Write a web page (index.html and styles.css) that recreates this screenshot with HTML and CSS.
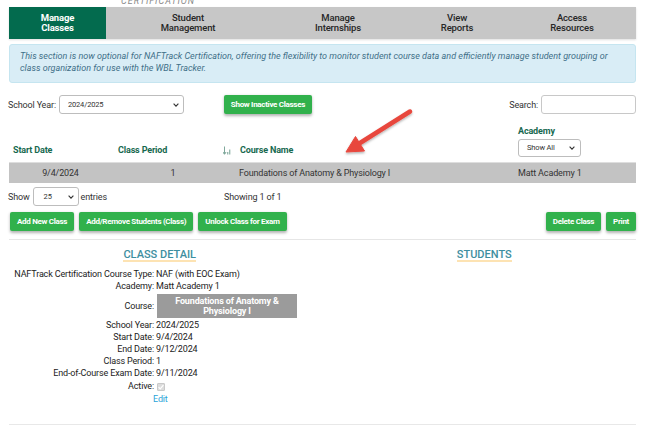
FILE: index.html
```html
<!DOCTYPE html>
<html lang="en">
<head>
<meta charset="utf-8">
<title>Manage Classes</title>
<link rel="stylesheet" href="styles.css">
</head>
<body>
<div class="page">
  <div class="cert"><span>CERTIFICATION</span></div>
  <nav class="tabs">
    <div class="tab active">Manage<br>Classes</div>
    <div class="tab">Student<br>Management</div>
    <div class="tab">Manage<br>Internships</div>
    <div class="tab">View<br>Reports</div>
    <div class="tab">Access<br>Resources</div>
  </nav>

  <div class="notice">This section is now optional for NAFTrack Certification, offering the flexibility to monitor student course data and efficiently manage student grouping or<br>class organization for use with the WBL Tracker.</div>

  <div class="toolbar">
    <span class="lbl">School Year:</span>
    <div class="select sy"><span>2024/2025</span><svg class="chev" width="6" height="4" viewBox="0 0 6 4"><polyline points="0.6,0.6 3,3.2 5.4,0.6"/></svg></div>
    <button class="btn inactive">Show Inactive Classes</button>
    <div class="search"><span class="lbl">Search:</span><div class="input"></div></div>
  </div>

  <div class="thead">
    <div class="th c1">Start Date</div>
    <div class="th c2">Class Period</div>
    <div class="th c3"><svg class="sort" width="8" height="9" viewBox="0 0 8 9"><path d="M1.5 0.5V8M0 6.2L1.5 8.3L3 6.2"/><rect x="4.2" y="6" width="1.1" height="2.5"/><rect x="6.2" y="3.5" width="1.1" height="5"/></svg><span>Course Name</span></div>
    <div class="th c4"><div>Academy</div><div class="select acad"><span>Show All</span><svg class="chev" width="6" height="4" viewBox="0 0 6 4"><polyline points="0.6,0.6 3,3.2 5.4,0.6"/></svg></div></div>
  </div>
  <div class="trow">
    <div class="c1">9/4/2024</div>
    <div class="c2">1</div>
    <div class="c3">Foundations of Anatomy &amp; Physiology I</div>
    <div class="c4">Matt Academy 1</div>
  </div>

  <div class="tfoot">
    <div class="len"><span>Show</span><div class="select num"><span>25</span><svg class="chev" width="6" height="4" viewBox="0 0 6 4"><polyline points="0.6,0.6 3,3.2 5.4,0.6"/></svg></div><span>entries</span></div>
    <div class="info">Showing 1 of 1</div>
  </div>

  <div class="actions">
    <div class="group">
      <button class="btn">Add New Class</button>
      <button class="btn">Add/Remove Students (Class)</button>
      <button class="btn">Unlock Class for Exam</button>
    </div>
    <div class="group">
      <button class="btn">Delete Class</button>
      <button class="btn">Print</button>
    </div>
  </div>

  <div class="detail">
    <section class="col left">
      <h2><span>CLASS DETAIL</span></h2>
      <dl class="facts">
        <dt>NAFTrack Certification Course Type:</dt><dd>NAF (with EOC Exam)</dd>
        <dt>Academy:</dt><dd>Matt Academy 1</dd>
        <dt class="mid">Course:</dt><dd><div class="course">Foundations of Anatomy &amp;<br>Physiology I</div></dd>
        <dt>School Year:</dt><dd>2024/2025</dd>
        <dt>Start Date:</dt><dd>9/4/2024</dd>
        <dt>End Date:</dt><dd>9/12/2024</dd>
        <dt>Class Period:</dt><dd>1</dd>
        <dt>End-of-Course Exam Date:</dt><dd>9/11/2024</dd>
        <dt class="act">Active:</dt><dd class="act"><span class="check"><svg width="8" height="8" viewBox="0 0 8 8"><polyline points="1.6,4.2 3.2,5.8 6.4,2.2"/></svg></span></dd>
        <dt></dt><dd><a class="edit">Edit</a></dd>
      </dl>
    </section>
    <section class="col right">
      <h2><span>STUDENTS</span></h2>
    </section>
  </div>
</div>

<svg class="arrow" width="650" height="436" viewBox="0 0 650 436">
  <defs>
    <filter id="sh" x="-20%" y="-20%" width="140%" height="140%">
      <feDropShadow dx="0" dy="1.5" stdDeviation="1.2" flood-color="#000" flood-opacity="0.3"/>
    </filter>
  </defs>
  <g filter="url(#sh)" fill="#e8473d" stroke="#e8473d">
    <line x1="410" y1="111.5" x2="360" y2="143" stroke-width="4.5" stroke-linecap="round"/>
    <polygon points="346,152 364.5,151 355.5,136.5" stroke-width="1" stroke-linejoin="round"/>
  </g>
</svg>
</body>
</html>
```

FILE: styles.css
```css
* { box-sizing: border-box; }

body {
  margin: 0;
  width: 650px;
  height: 436px;
  overflow: hidden;
  position: relative;
  background: #fff;
  font-family: Roboto, "Liberation Sans", sans-serif;
  font-size: 9px;
  letter-spacing: -0.15px;
  color: #333;
}

.page {
  margin-left: 9px;
  width: 627px;
}

/* clipped section title */
.cert {
  height: 7px;
  overflow: hidden;
  padding-left: 112px;
  font-size: 9px;
  line-height: 9px;
  font-style: italic;
  letter-spacing: 1px;
  color: #8a8a8a;
}
.cert span { display: block; margin-top: -3px; }

/* top tabs */
.tabs {
  display: grid;
  grid-template-columns: 97px 164px 136px 102px 1fr;
  height: 32px;
  background: #c7c7c7;
  box-shadow: 0 1px 2px rgba(0, 0, 0, 0.13);
}
.tab {
  display: flex;
  align-items: center;
  justify-content: center;
  text-align: center;
  font-size: 9.5px;
  line-height: 10px;
  font-weight: 500;
  color: #262626;
}
.tab.active {
  background: #036b4e;
  color: #fff;
  font-weight: 700;
}

/* notice */
.notice {
  margin-top: 5px;
  height: 39px;
  padding: 6px 10px;
  border: 1px solid #c5e5f0;
  border-radius: 3px;
  background: #d9edf6;
  color: #3f6f88;
  font-style: italic;
  font-size: 9px;
  line-height: 11.5px;
  letter-spacing: 0;
  white-space: nowrap;
}

/* toolbar */
.toolbar {
  margin-top: 12px;
  height: 19px;
  display: flex;
  align-items: center;
}
.lbl { font-size: 9px; color: #333; margin-left: -1px; }

.select {
  display: flex;
  align-items: center;
  justify-content: space-between;
  height: 19px;
  border: 1px solid #bdbdbd;
  border-radius: 3px;
  background: #fff;
  font-size: 7.5px;
  color: #333;
}
.chev { fill: none; stroke: #333; stroke-width: 1.1; }
.select.sy { width: 125px; margin-left: 3px; padding: 0 4px 0 8px; }

.btn {
  height: 19px;
  padding: 0 7px;
  border: 0;
  border-radius: 2px;
  background: #31b14c;
  color: #fff;
  font-family: inherit;
  font-size: 8px;
  font-weight: 700;
  letter-spacing: -0.3px;
  box-shadow: 0 1.5px 3px rgba(0, 0, 0, 0.3);
  white-space: nowrap;
}
.btn.inactive { margin-left: 40px; width: 88px; padding: 0; }

.search {
  margin-left: auto;
  display: flex;
  align-items: center;
}
.search .input {
  width: 95px;
  height: 19px;
  margin-left: 3px;
  border: 1px solid #c8c8c8;
  border-radius: 3px;
}

/* table */
.thead, .trow {
  display: grid;
  grid-template-columns: 103px 107px 291px 1fr;
}
.thead {
  margin-top: 11px;
  border-bottom: 1px solid #dedede;
}
.th {
  align-self: end;
  padding-bottom: 6px;
  font-weight: 700;
  line-height: 12px;
  color: #17694f;
}
.thead .c1 { padding-left: 4px; }
.thead .c2 { padding-left: 6px; }
.thead .c3 { padding-left: 4px; display: flex; align-items: center; }
.thead .c3 .sort { margin-right: 9px; fill: #7fa89b; stroke: #7fa89b; stroke-width: 1; }
.thead .c3 .sort rect { stroke: none; }
.thead .c4 { padding-left: 8px; padding-bottom: 5px; }
.select.acad { width: 63px; height: 18px; margin-top: 2px; padding: 0 5px 0 8px; font-weight: 400; color: #333; }

.trow {
  height: 20px;
  align-items: center;
  background: #c3c3c3;
  color: #333;
}
.trow .c1 { text-align: center; }
.trow .c2 { text-align: center; padding-left: 15px; }
.trow .c3 { padding-left: 20px; }
.trow .c4 { padding-left: 8px; }

/* table footer */
.tfoot {
  margin-top: 4px;
  height: 19px;
  display: grid;
  grid-template-columns: 215px 1fr;
  align-items: center;
}
.len { display: flex; align-items: center; margin-left: -1px; }
.select.num { width: 46px; margin: 0 2px 0 3px; padding: 0 4px 0 10px; }

.actions {
  margin-top: 6px;
  display: flex;
  justify-content: space-between;
}
.group { display: flex; gap: 5px; }
.actions .group:first-child { margin-left: 1px; }

/* detail */
.detail {
  margin-top: 8px;
  border-top: 1px solid #e6e6e6;
  border-bottom: 1px solid #e8e8e8;
  display: grid;
  grid-template-columns: 1fr 1fr;
  padding-bottom: 19px;
}
.col h2 {
  margin: 10px 0 0;
  text-align: center;
  font-size: 11px;
  font-weight: 500;
  line-height: 10px;
  letter-spacing: 0;
}
.col h2 span {
  display: inline-block;
  color: #3d8ea0;
  border-bottom: 2px solid #fde3b3;
}
.col.left h2 { padding-right: 12px; }
.col.right h2 { padding-left: 10px; }

.facts {
  margin: 6px 0 0;
  display: grid;
  grid-template-columns: 145px 1fr;
  column-gap: 2px;
  line-height: 12px;
  color: #222;
}
.facts dt { text-align: right; }
.facts dd { margin: 0; }
.facts dt.mid { align-self: center; }
.course {
  width: 140px;
  height: 24px;
  margin: 2px 0 1px 1px;
  display: flex;
  align-items: center;
  justify-content: center;
  text-align: center;
  background: #9b9b9b;
  color: #fff;
  font-weight: 700;
  line-height: 10px;
}
.facts .act { height: 13px; line-height: 13px; margin-top: 1px; }
.check {
  display: inline-block;
  width: 8px;
  height: 8px;
  margin: 3px 0 0 1px;
  vertical-align: top;
  border: 1px solid #c9c9c9;
  border-radius: 1px;
  background: #dcdcdc;
}
.check svg { display: block; margin: -1px; fill: none; stroke: #fff; stroke-width: 1.2; }
.edit { color: #2aa4d8; margin-left: -3px; }

.arrow {
  position: absolute;
  left: 0;
  top: 0;
  pointer-events: none;
}
```
